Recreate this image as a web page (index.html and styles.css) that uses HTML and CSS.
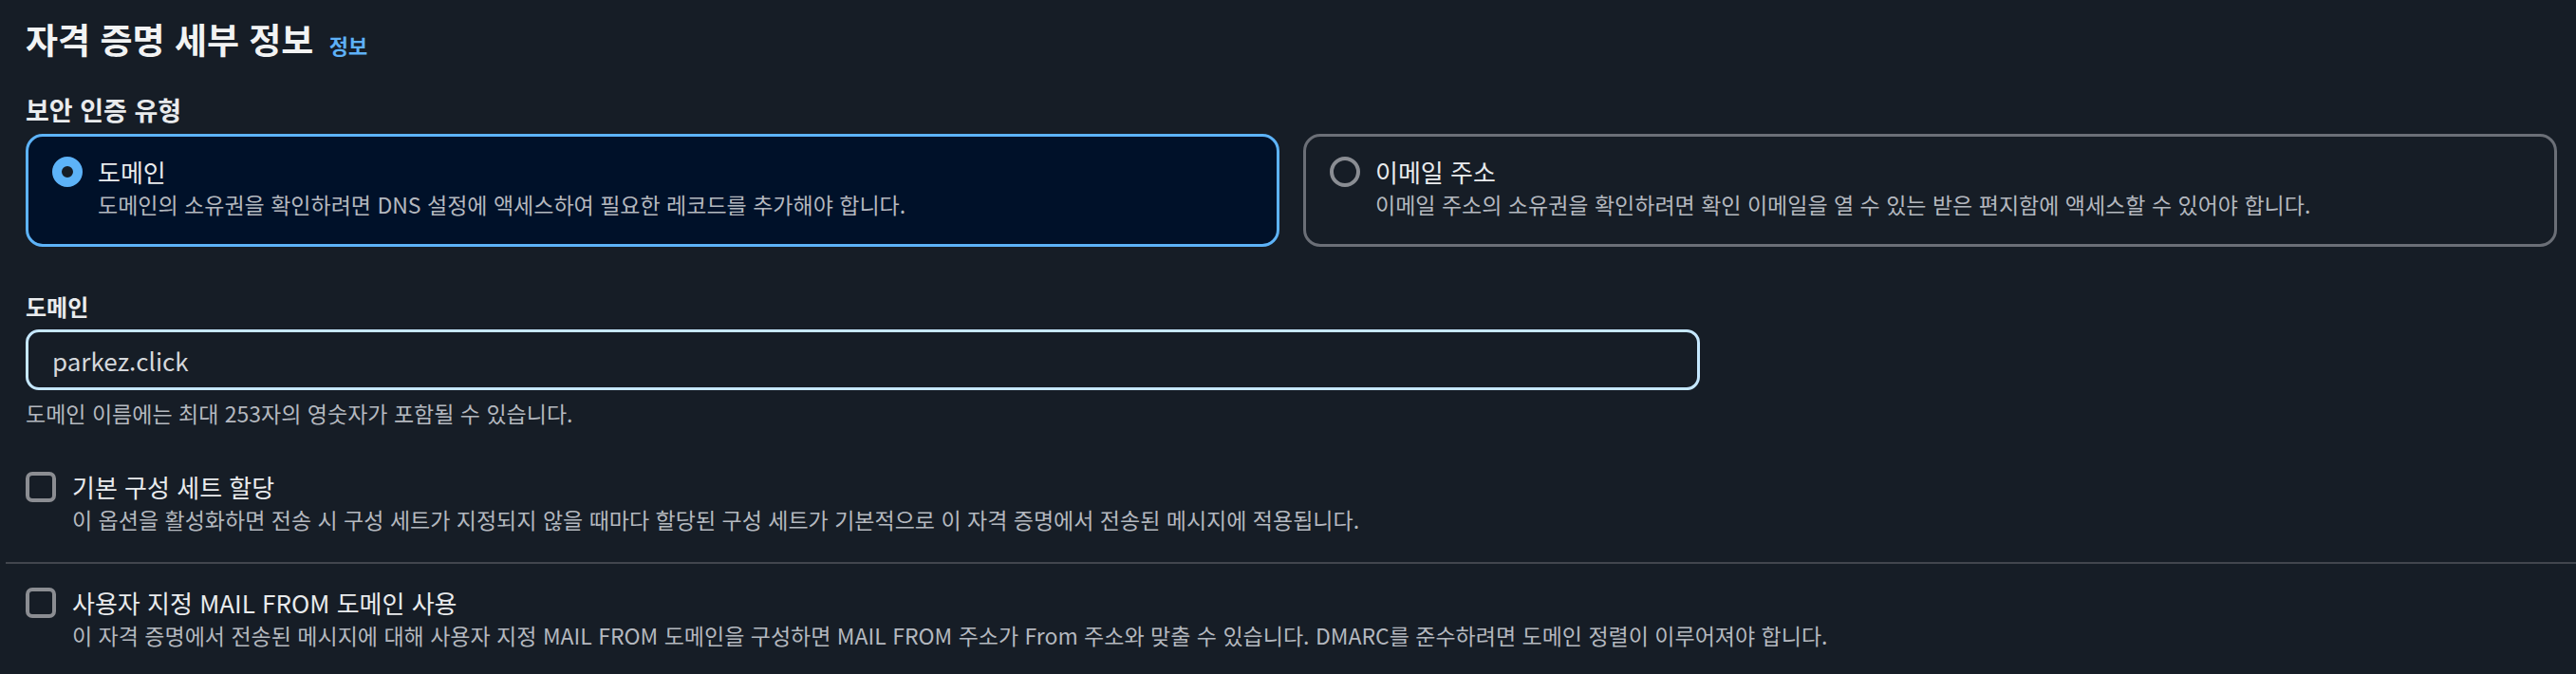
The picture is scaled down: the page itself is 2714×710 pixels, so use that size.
FILE: index.html
```html
<!DOCTYPE html>
<html lang="ko">
<head>
<meta charset="utf-8">
<title>자격 증명 세부 정보</title>
<link rel="stylesheet" href="styles.css">
</head>
<body>
<main class="page">
  <h2 class="title">자격 증명 세부 정보 <a class="info" href="#">정보</a></h2>

  <section class="field">
    <div class="group-label">보안 인증 유형</div>
    <div class="tiles">
      <label class="tile tile-selected">
        <span class="radio radio-on"></span>
        <span class="tile-text">
          <span class="tile-label">도메인</span>
          <span class="tile-desc">도메인의 소유권을 확인하려면 DNS 설정에 액세스하여 필요한 레코드를 추가해야 합니다.</span>
        </span>
      </label>
      <label class="tile">
        <span class="radio"></span>
        <span class="tile-text">
          <span class="tile-label">이메일 주소</span>
          <span class="tile-desc">이메일 주소의 소유권을 확인하려면 확인 이메일을 열 수 있는 받은 편지함에 액세스할 수 있어야 합니다.</span>
        </span>
      </label>
    </div>
  </section>

  <section class="field field-domain">
    <div class="field-label">도메인</div>
    <div class="input">parkez.click</div>
    <div class="hint">도메인 이름에는 최대 253자의 영숫자가 포함될 수 있습니다.</div>
  </section>

  <div class="check check-first">
    <span class="box"></span>
    <span class="check-text">
      <span class="check-label">기본 구성 세트 할당</span>
      <span class="check-desc">이 옵션을 활성화하면 전송 시 구성 세트가 지정되지 않을 때마다 할당된 구성 세트가 기본적으로 이 자격 증명에서 전송된 메시지에 적용됩니다.</span>
    </span>
  </div>

  <hr class="divider">

  <div class="check">
    <span class="box"></span>
    <span class="check-text">
      <span class="check-label">사용자 지정 MAIL FROM 도메인 사용</span>
      <span class="check-desc">이 자격 증명에서 전송된 메시지에 대해 사용자 지정 MAIL FROM 도메인을 구성하면 MAIL FROM 주소가 From 주소와 맞출 수 있습니다. DMARC를 준수하려면 도메인 정렬이 이루어져야 합니다.</span>
    </span>
  </div>
</main>
</body>
</html>
```
FILE: styles.css
```css
html, body {
  margin: 0;
  padding: 0;
  background: #161d26;
}
body {
  font-family: "Noto Sans CJK KR", "Noto Sans", sans-serif;
  color: #e9ebed;
  overflow: hidden;
}
.page {
  padding: 16px 20px 0 27px;
  width: 2667px;
}
.title {
  margin: 0;
  font-size: 37px;
  line-height: 50px;
  font-weight: 700;
  color: #f2f3f3;
}
.info {
  font-size: 22px;
  font-weight: 700;
  color: #5eb1f7;
  text-decoration: none;
  margin-left: 6px;
}
.field {
  margin-top: 26px;
}
.group-label {
  font-size: 27px;
  line-height: 36px;
  font-weight: 700;
  color: #e9ebed;
}
.tiles {
  display: grid;
  grid-template-columns: 1fr 1fr;
  gap: 25px;
  margin-top: 7px;
}
.tile {
  display: flex;
  align-items: flex-start;
  gap: 16px;
  height: 119px;
  box-sizing: border-box;
  border: 3px solid #6b6f77;
  border-radius: 18px;
  padding: 21px 24px 0 25px;
}
.tile-selected {
  border-color: #5db3f8;
  background: #001129;
}
.radio {
  flex: none;
  width: 32px;
  height: 32px;
  box-sizing: border-box;
  border-radius: 50%;
  border: 4px solid #8a8d93;
}
.radio-on {
  border: 10px solid #5db3f8;
  background: #161d26;
}
.tile-text {
  display: flex;
  flex-direction: column;
}
.tile-label {
  font-size: 26px;
  line-height: 32px;
}
.tile-desc {
  font-size: 23px;
  line-height: 30px;
  color: #b4b8bf;
  margin-top: 3px;
}
.field-domain {
  margin-top: 47px;
}
.field-label {
  font-size: 24px;
  line-height: 32px;
  font-weight: 700;
}
.input {
  margin-top: 8px;
  width: 1764px;
  height: 64px;
  box-sizing: border-box;
  border: 3px solid #c5e7fe;
  border-radius: 14px;
  padding: 0 25px;
  display: flex;
  align-items: center;
  font-size: 26px;
  color: #d5d8dc;
}
.hint {
  margin-top: 9px;
  font-size: 23px;
  line-height: 30px;
  color: #b4b8bf;
}
.check {
  display: flex;
  align-items: flex-start;
  gap: 17px;
}
.check-first {
  margin-top: 47px;
}
.box {
  flex: none;
  width: 32px;
  height: 32px;
  box-sizing: border-box;
  border: 4px solid #8b8d92;
  border-radius: 7px;
}
.check-text {
  display: flex;
  flex-direction: column;
}
.check-label {
  font-size: 26px;
  line-height: 32px;
}
.check-desc {
  font-size: 23px;
  line-height: 30px;
  color: #b4b8bf;
  margin-top: 3px;
}
.divider {
  border: 0;
  height: 2px;
  background: #42464e;
  margin: 30px -20px 25px -21px;
}
```
